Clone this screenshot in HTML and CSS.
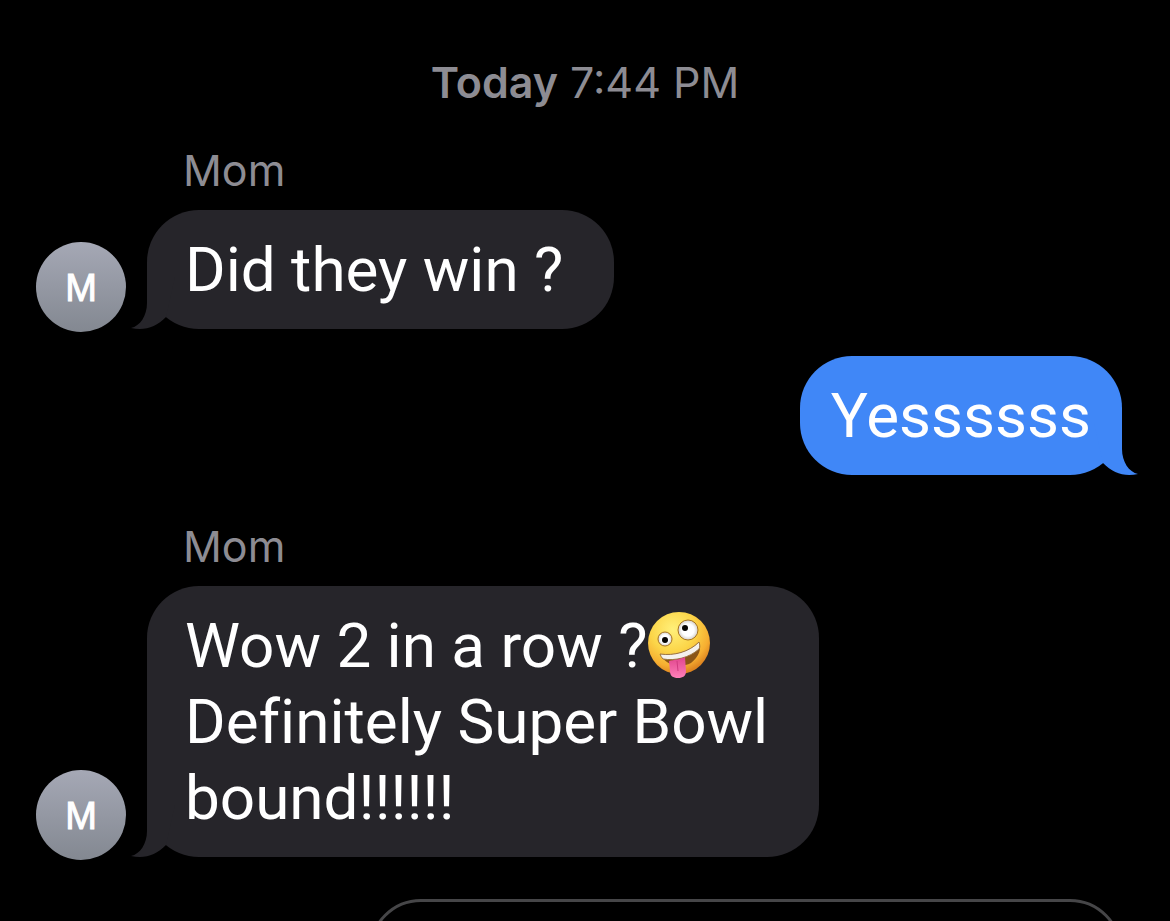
FILE: index.html
```html
<!DOCTYPE html>
<html lang="en">
<head>
  <meta charset="utf-8">
  <meta name="viewport" content="width=device-width, initial-scale=1">
  <title>Messages</title>
  <link rel="stylesheet" href="styles.css">
</head>
<body>

<main class="thread">
  <p class="timestamp"><strong>Today</strong> 7:44 PM</p>

  <section class="message received">
    <p class="sender">Mom</p>
    <div class="row">
      <div class="avatar">M</div>
      <div class="bubble">
        Did they win ?
        <svg class="tail" viewBox="0 0 52 52" aria-hidden="true">
          <path d="M16 0V26C16 39 9 49 0 51C14 54 25 50 35 40L44 0Z"/>
        </svg>
      </div>
    </div>
  </section>

  <section class="message sent">
    <div class="bubble">
      Yessssss
      <svg class="tail" viewBox="0 0 52 52" aria-hidden="true">
        <path d="M16 0V26C16 39 9 49 0 51C14 54 25 50 35 40L44 0Z"/>
      </svg>
    </div>
  </section>

  <section class="message received">
    <p class="sender">Mom</p>
    <div class="row">
      <div class="avatar">M</div>
      <div class="bubble">
        Wow 2 in a row ?<svg class="emoji" viewBox="0 0 64 68" role="img" aria-label="zany face">
          <defs>
            <radialGradient id="face" cx="40%" cy="28%" r="72%">
              <stop offset="0" stop-color="#fff07a"/>
              <stop offset="0.5" stop-color="#fcd548"/>
              <stop offset="0.82" stop-color="#f6ae31"/>
              <stop offset="1" stop-color="#dd8420"/>
            </radialGradient>
            <radialGradient id="eye">
              <stop offset="0.6" stop-color="#fff"/>
              <stop offset="1" stop-color="#d3cfca"/>
            </radialGradient>
            <linearGradient id="tongue" x1="0" y1="0" x2="0" y2="1">
              <stop offset="0" stop-color="#e0458d"/>
              <stop offset="1" stop-color="#ff7fb9"/>
            </linearGradient>
          </defs>
          <circle cx="32" cy="32" r="31" fill="url(#face)"/>
          <circle cx="18" cy="28" r="7" fill="url(#eye)" stroke="#a8741f"/>
          <circle cx="41" cy="19" r="10" fill="url(#eye)" stroke="#a8741f"/>
          <circle cx="18" cy="29" r="3" fill="#080604"/>
          <circle cx="38" cy="17" r="3" fill="#080604"/>
          <path d="M13 43C27 45 42 41 52 31C55 37 52 46 44 52C33 58 18 54 13 43Z" fill="#8a5516"/>
          <path d="M13 43C27 45 42 41 52 31C53 34 53 36 52 38C42 47 28 50 16 48Q14 46 13 43Z" fill="#f5f1ec" stroke="#9b7440"/>
          <path d="M22 50C27 49 34 48 38 46L39 60C39 65 36 67 31 67C26 67 23 65 23 60Z" fill="url(#tongue)"/>
          <path d="M30 50L31 60" stroke="#cf3b80" stroke-width="1"/>
        </svg><br>
        Definitely Super Bowl<br>
        bound!!!!!!
        <svg class="tail" viewBox="0 0 52 52" aria-hidden="true">
          <path d="M16 0V26C16 39 9 49 0 51C14 54 25 50 35 40L44 0Z"/>
        </svg>
      </div>
    </div>
  </section>

  <section class="message outlined"></section>
</main>

</body>
</html>
```

FILE: styles.css
```css
* {
  box-sizing: border-box;
}

body {
  margin: 0;
  background-color: #000;
  color: #fff;
  font-family: Inter, "Liberation Sans", sans-serif;
}

p {
  margin: 0;
}

.thread {
  display: flex;
  flex-direction: column;
  height: 100vh;
  padding: 55px 48px 0 36px;
  overflow: hidden;
}

.message {
  flex-shrink: 0;
}

.timestamp {
  flex-shrink: 0;
  padding-left: 12px;
  color: #8d8c93;
  font-size: 43px;
  line-height: 54px;
  text-align: center;
}

.timestamp strong {
  font-weight: 600;
}

.sender {
  padding: 0 0 13px 147px;
  color: #8d8c93;
  font-size: 43px;
  line-height: 54px;
}

.received {
  margin-top: 34px;
}

.row {
  display: flex;
  align-items: flex-end;
  gap: 21px;
}

.avatar {
  display: flex;
  align-items: center;
  justify-content: center;
  flex-shrink: 0;
  width: 90px;
  height: 90px;
  margin-bottom: -3px;
  padding-top: 3px;
  border-radius: 50%;
  background: linear-gradient(#a5a8b5, #838891);
  font-family: "Liberation Sans", Arial, sans-serif;
  font-size: 38px;
  -webkit-text-stroke: 1px #fff;
}

.bubble {
  position: relative;
  padding: 22px 51px 21px 38px;
  border-radius: 52px;
  background-color: #26252a;
  font-family: Roboto, "Liberation Sans", sans-serif;
  font-size: 62px;
  font-variant-ligatures: none;
  line-height: 76px;
}

.tail {
  position: absolute;
  bottom: 0;
  left: -16px;
  width: 52px;
  height: 52px;
  fill: #26252a;
}

.emoji {
  width: 64px;
  height: 68px;
  vertical-align: -12px;
}

.sent {
  align-self: flex-end;
  margin-top: 27px;
}

.sent .bubble {
  padding: 22px 31px 21px;
  background-color: #4087f7;
}

.sent .tail {
  right: -16px;
  left: auto;
  fill: #4087f7;
  transform: scaleX(-1);
}

.sent + .received {
  margin-top: 44px;
}

.outlined {
  height: 119px;
  margin-top: 42px;
  margin-left: 333px;
  border: 3px solid #464648;
  border-radius: 52px;
}
```
